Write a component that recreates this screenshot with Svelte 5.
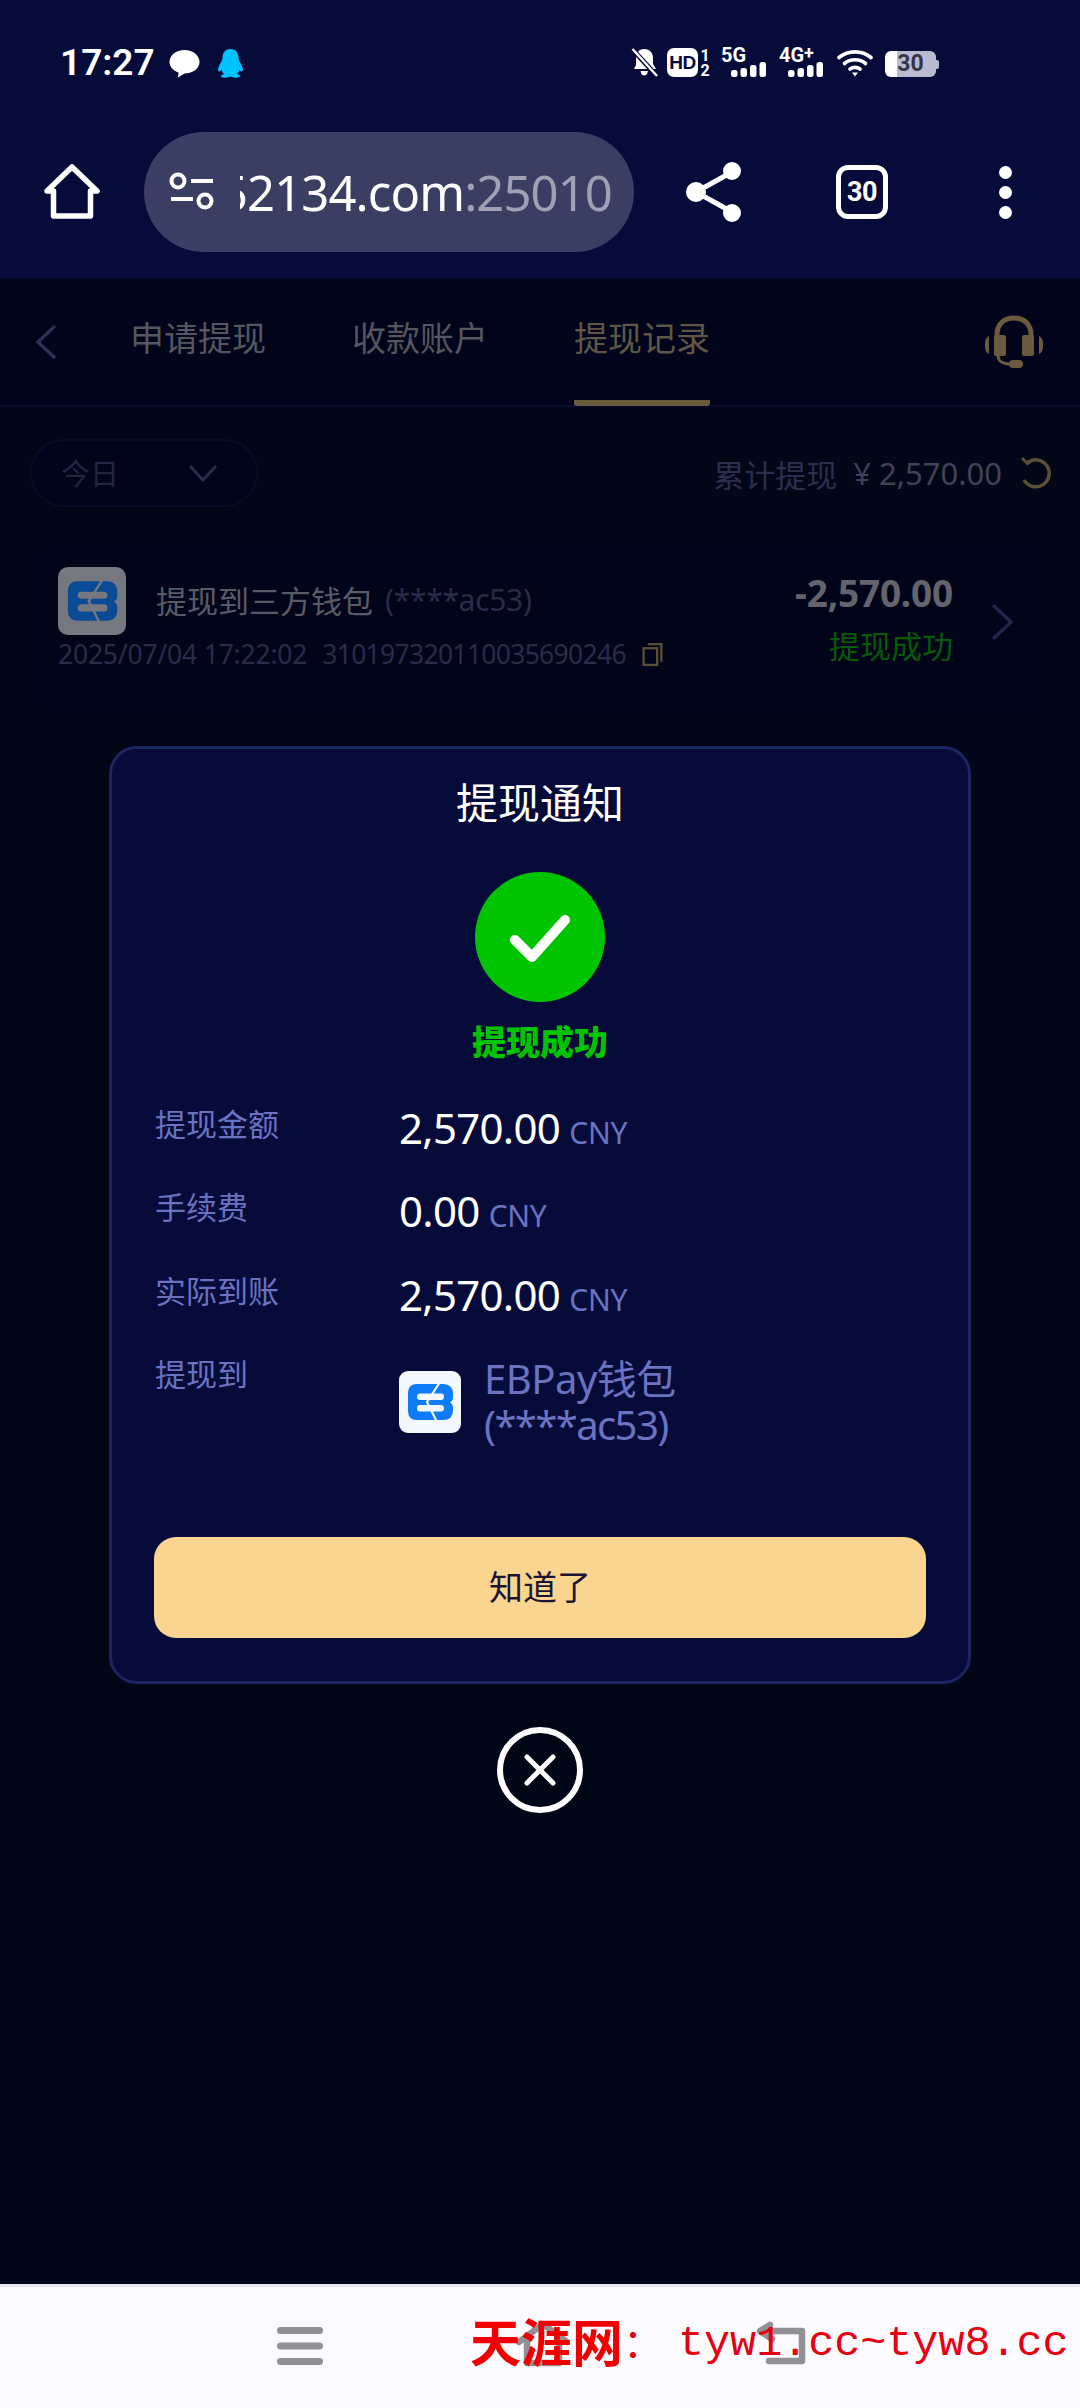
<script>
  const rows = [
    { label: '提现金额', value: '2,570.00' },
    { label: '手续费', value: '0.00' },
    { label: '实际到账', value: '2,570.00' }
  ];
  const tabs = ['申请提现', '收款账户', '提现记录'];
</script>

{#snippet eb(size, dim)}
  <svg class="eb" width={size} height={size} viewBox="0 0 62 62">
    <rect width="62" height="62" rx="9" fill={dim ? '#76787f' : '#f3f8ff'} />
    <path d="M18 13H44Q54 13 54 23V26Q54 30 51 31.500Q54 33 54 37V39Q54 49 44 49H18Q9 49 9 40V22Q9 13 18 13Z" fill={dim ? '#0b4a94' : '#0d7cf6'} />
    <rect x="18" y="22.500" width="27" height="6.500" rx="3.200" fill={dim ? '#76787f' : '#f3f8ff'} />
    <rect x="18" y="34" width="27" height="6.500" rx="3.200" fill={dim ? '#76787f' : '#f3f8ff'} />
    <path d="M41 11L28 31L38 51" stroke={dim ? '#76787f' : '#f3f8ff'} stroke-width="2.200" fill="none" />
  </svg>
{/snippet}

{#snippet bars()}
  <svg class="bars" width="35" height="15" viewBox="0 0 35 15">
    <rect x="0" y="8" width="6.500" height="7" rx="2.500" />
    <rect x="9.500" y="6" width="6.500" height="9" rx="2.500" />
    <rect x="19" y="3" width="6.500" height="12" rx="2.500" />
    <rect x="28.500" y="0" width="6.500" height="15" rx="2.500" />
  </svg>
{/snippet}

<div class="page">
  <header class="chrome">
    <div class="status">
      <div class="status-left">
        <span class="time">17:27</span>
        <svg width="31" height="30" viewBox="0 0 31 30"><path d="M15.500 2C24 2 30.500 7.500 30.500 14S24 25.500 15.500 25.500L9 29.500L9.500 24.500C4 22.500 .5 18.500 .5 14C.5 7.500 7 2 15.500 2Z" fill="#fff"/></svg>
        <svg class="qq" width="27" height="30" viewBox="0 0 27 30"><path d="M13.500 1C19 1 21.500 5 21.500 10C21.500 12 23 14 24.500 17C26 20 26.500 23 25 23.500C24 23.800 23 22.500 22.500 21.500C22 23.500 21 25 20 26C21.500 26.500 23 27 23 28.500C23 29.500 20 30 17 29.500C15.500 29.200 14.500 28.800 13.500 28.800C12.500 28.800 11.500 29.200 10 29.500C7 30 4 29.500 4 28.500C4 27 5.500 26.500 7 26C6 25 5 23.500 4.500 21.500C4 22.500 3 23.800 2 23.500C.5 23 1 20 2.500 17C4 14 5.500 12 5.500 10C5.500 5 8 1 13.500 1Z" fill="#00c2ff"/></svg>
      </div>
      <div class="status-right">
        <svg class="bell" width="27" height="29" viewBox="0 0 27 29"><path d="M13 1C19 1 22 5 22 10V16L25 21H3L5 17V10C5 5 8 1 13 1ZM9.500 23H17C16.500 26 15 27.500 13.200 27.500C11.500 27.500 10 26 9.500 23Z" fill="#fff"/><path d="M1 1L26 28" stroke="#070b3a" stroke-width="5"/><path d="M1.500 1L26 28" stroke="#fff" stroke-width="2.400"/></svg>
        <div class="hd"><span class="hd-box">HD</span><span class="sims"><i>1</i><i>2</i></span></div>
        <div class="net five"><span>5G</span>{@render bars()}</div>
        <div class="net four"><span>4G<sup>+</sup></span>{@render bars()}</div>
        <svg class="wifi" width="36" height="28" viewBox="0 0 36 28" fill="none" stroke="#fff" stroke-width="3.600" stroke-linecap="round"><path d="M2 8.500C11 1 25 1 34 8.500"/><path d="M7.500 14.500C13.500 9.500 22.500 9.500 28.500 14.500"/><path d="M13 20C16 18 20 18 23 20"/><path d="M15 23.500H21L18 27.500Z" fill="#fff" stroke="none"/></svg>
        <div class="battery"><span class="batt-body"><span class="batt-num">30</span></span><span class="batt-tip"></span></div>
      </div>
    </div>

    <div class="toolbar">
      <svg class="home" width="56" height="56" viewBox="0 0 56 56" fill="none" stroke="#fff" stroke-width="5.500" stroke-linejoin="round" stroke-linecap="round"><path d="M3 27L28 3L53 27H46.500V52H9.500V27Z"/></svg>
      <div class="pill">
        <svg class="tune" width="46" height="40" viewBox="0 0 46 40" fill="none" stroke="#fff" stroke-width="4"><circle cx="9" cy="9" r="6.500"/><path d="M22 9H44"/><path d="M2 27H24"/><circle cx="36" cy="29" r="6.500"/></svg>
        <div class="url"><span>ty52134.com<em>:25010</em></span></div>
      </div>
      <svg class="share" width="58" height="62" viewBox="0 0 58 62" fill="#fff"><path d="M47 11L11 31L47 51" stroke="#fff" stroke-width="5" fill="none"/><circle cx="47" cy="10" r="9"/><circle cx="11" cy="31" r="10"/><circle cx="47" cy="52" r="9"/></svg>
      <div class="tab-count">30</div>
      <div class="kebab"><i></i><i></i><i></i></div>
    </div>
  </header>

  <main class="content">
    <nav class="tabs">
      <svg class="back" width="24" height="36" viewBox="0 0 24 36" fill="none" stroke="#2e3054" stroke-width="3.500"><path d="M21 2L4 18L21 34"/></svg>
      <ul class="tab-list">
        {#each tabs as t, i}
          <li class:active={i === 2}>{t}</li>
        {/each}
      </ul>
      <svg class="headset" width="62" height="54" viewBox="0 0 62 54" fill="#6a5b3e"><path d="M14 30V20C14 9 21 3 31 3C41 3 48 9 48 20V30" fill="none" stroke="#6a5b3e" stroke-width="5"/><rect x="11" y="20" width="12" height="21" rx="2"/><rect x="39" y="20" width="12" height="21" rx="2"/><path d="M2 28C2 24 4 22 6 21V39C4 38 2 36 2 32Z"/><path d="M60 28C60 24 58 22 56 21V39C58 38 60 36 60 32Z"/><path d="M15 41C15 46 20 49 28 49" fill="none" stroke="#6a5b3e" stroke-width="3"/><rect x="26" y="45" width="14" height="8" rx="4"/></svg>
    </nav>

    <div class="filter-row">
      <div class="select"><span>今日</span><svg width="30" height="18" viewBox="0 0 30 18" fill="none" stroke="#2a2c4c" stroke-width="3"><path d="M2 2L15 16L28 2"/></svg></div>
      <div class="total">
        <span class="total-label">累计提现</span>
        <span class="total-val">¥ 2,570.00</span>
        <svg width="34" height="34" viewBox="0 0 34 34" fill="none" stroke="#5a5036" stroke-width="3.500"><path d="M9 7A13.500 13.500 0 1 1 6 24"/><path d="M4 2L9.500 7.500L15 4" stroke-width="3"/></svg>
      </div>
    </div>

    <article class="card">
      <div class="card-main">
        <div class="card-title">
          {@render eb(68, true)}
          <span class="cname">提现到三方钱包</span>
          <span class="cmask">(****ac53)</span>
        </div>
        <div class="card-meta">
          <span>2025/07/04 17:22:02</span>
          <span class="order">310197320110035690246</span>
          <svg width="23" height="25" viewBox="0 0 21 24" fill="none" stroke="#5a5036" stroke-width="2.200"><rect x="2" y="6" width="13" height="16"/><path d="M6 2H19V19"/></svg>
        </div>
      </div>
      <div class="card-side">
        <div class="amount">-2,570.00</div>
        <div class="state">提现成功</div>
      </div>
      <svg class="card-arrow" width="24" height="38" viewBox="0 0 24 38" fill="none" stroke="#23254a" stroke-width="3.500"><path d="M3 2L21 19L3 36"/></svg>
    </article>

    <div class="overlay">
      <section class="modal">
        <h2>提现通知</h2>
        <div class="ok">
          <svg width="62" height="50" viewBox="0 0 62 50" fill="none" stroke="#fff" stroke-width="10" stroke-linecap="round" stroke-linejoin="round"><path d="M6 26L23 43L56 6"/></svg>
        </div>
        <div class="ok-text">提现成功</div>
        <dl class="rows">
          {#each rows as r}
            <div class="row">
              <dt>{r.label}</dt>
              <dd><b>{r.value}</b> <small>CNY</small></dd>
            </div>
          {/each}
          <div class="row dest">
            <dt>提现到</dt>
            <dd class="wallet">
              {@render eb(62, false)}
              <span class="wallet-text"><span class="wname">EBPay钱包</span><span class="wmask">(****ac53)</span></span>
            </dd>
          </div>
        </dl>
        <button class="confirm">知道了</button>
      </section>
      <div class="close">
        <svg width="34" height="34" viewBox="0 0 34 34" fill="none" stroke="#fff" stroke-width="5" stroke-linecap="round"><path d="M4 4L30 30M30 4L4 30"/></svg>
      </div>
    </div>
  </main>

  <footer class="navbar">
    <svg width="46" height="38" viewBox="0 0 46 38" fill="#909095"><rect y="0" width="46" height="7" rx="3.500"/><rect y="15.500" width="46" height="7" rx="3.500"/><rect y="31" width="46" height="7" rx="3.500"/></svg>
    <svg width="54" height="46" viewBox="0 0 54 46" fill="none" stroke="#909095" stroke-width="6.500" stroke-linejoin="round" stroke-linecap="round"><path d="M3 21L27 3L51 21"/><path d="M11 20V42H43V20"/></svg>
    <svg width="50" height="44" viewBox="0 0 50 44" fill="none" stroke="#909095" stroke-width="6.500" stroke-linejoin="round" stroke-linecap="round"><path d="M13 40H46V10H6"/><path d="M14 4L4 10L16 18"/></svg>
    <div class="watermark"><strong>天涯网</strong><span>：</span><span class="wm-url">tyw1.cc~tyw8.cc</span></div>
  </footer>
</div>

<style>
  :global(body) {
    margin: 0;
    background: #01061a;
  }
  .page {
    width: 1080px;
    height: 2408px;
    display: flex;
    flex-direction: column;
    overflow: hidden;
    font-family: "Noto Sans", "Noto Sans CJK SC", sans-serif;
  }
  .chrome {
    height: 278px;
    flex: none;
    background: #070b3a;
    box-sizing: border-box;
    padding-top: 48px;
    color: #fff;
  }
  .status {
    height: 30px;
    display: flex;
    justify-content: space-between;
    align-items: center;
    padding: 0 141px 0 60px;
  }
  .status-left {
    display: flex;
    align-items: center;
  }
  .time {
    font: 600 37px/30px Roboto, sans-serif;
    width: 109px;
  }
  .qq { margin-left: 17px; }
  .status-right {
    display: flex;
    align-items: flex-start;
  }
  .bell { margin-right: 9px; }
  .hd {
    display: flex;
    margin-right: 10px;
  }
  .hd-box {
    width: 31px;
    height: 29px;
    border-radius: 7px;
    background: #fff;
    color: #070b3a;
    font: 800 19px/29px "Liberation Sans", sans-serif;
    text-align: center;
    letter-spacing: -0.5px;
  }
  .sims {
    width: 12px;
    margin-left: 1px;
    display: flex;
    flex-direction: column;
    font: 700 16px/15px Roboto, sans-serif;
    text-align: center;
  }
  .sims i { font-style: normal; }
  .net {
    display: flex;
    flex-direction: column;
  }
  .net span {
    font: 700 20px/14px Roboto, sans-serif;
    height: 14px;
    white-space: nowrap;
  }
  .net sup {
    font-size: 18px;
    line-height: 0;
    vertical-align: 3px;
  }
  .bars { fill: #fff; }
  .five { width: 45px; margin-right: 13px; }
  .five .bars { margin-left: 10px; }
  .four { width: 44px; margin-right: 14px; }
  .four .bars { margin-left: 9px; }
  .wifi { margin-right: 12px; margin-top: 1px; }
  .battery {
    display: flex;
    align-items: center;
    margin-top: 3px;
  }
  .batt-body {
    width: 51px;
    height: 26px;
    border-radius: 6px;
    background: linear-gradient(90deg, #fff 0 23%, #b9bbd0 23%);
    color: #35364a;
    font: 700 23px/26px Roboto, sans-serif;
    text-align: center;
  }
  .batt-tip {
    width: 3px;
    height: 9px;
    background: #b9bbd0;
    border-radius: 0 2px 2px 0;
  }
  .toolbar {
    margin-top: 54px;
    height: 120px;
    display: flex;
    align-items: center;
  }
  .home { margin-left: 44px; }
  .pill {
    margin-left: 44px;
    width: 490px;
    height: 120px;
    border-radius: 60px;
    background: #3b3e63;
    display: flex;
    align-items: center;
    box-sizing: border-box;
    padding-left: 25px;
  }
  .url {
    margin-left: 25px;
    width: 372px;
    display: flex;
    justify-content: flex-end;
    overflow: hidden;
    font-size: 49px;
    line-height: 66px;
    letter-spacing: -0.9px;
    white-space: nowrap;
    color: #fff;
  }
  .url span { flex: none; }
  .url em {
    font-style: normal;
    color: #9fa0b4;
  }
  .share { margin-left: 51px; }
  .tab-count {
    margin-left: 93px;
    width: 52px;
    height: 54px;
    box-sizing: border-box;
    border: 5px solid #fff;
    border-radius: 12px;
    font: 700 27px/44px Roboto, sans-serif;
    letter-spacing: -0.5px;
    text-align: center;
  }
  .kebab {
    margin-left: 111px;
    display: flex;
    flex-direction: column;
    gap: 7px;
  }
  .kebab i {
    width: 13px;
    height: 13px;
    border-radius: 50%;
    background: #fff;
  }
  .content {
    flex: 1;
    position: relative;
    background: #020717;
  }
  .tabs {
    height: 129px;
    box-sizing: border-box;
    background: #01041a;
    border-bottom: 2px solid #0a0d30;
    display: flex;
    align-items: flex-start;
    position: relative;
  }
  .back { margin: 46px 0 0 34px; }
  .tab-list {
    list-style: none;
    margin: 0 0 0 72px;
    padding: 0;
    display: flex;
    gap: 86px;
    font-size: 34px;
    color: #55565f;
  }
  .tab-list li {
    width: 136px;
    height: 127px;
    line-height: 118px;
    white-space: nowrap;
    box-sizing: border-box;
    font-family: "Noto Sans CJK SC", sans-serif;
  }
  .tab-list li.active {
    color: #5f5746;
    border-bottom: 6px solid #6a5b3e;
    border-radius: 0 0 3px 3px;
    height: 128px;
  }
  .headset {
    margin: 37px 35px 0 auto;
  }
  .filter-row {
    margin-top: 32px;
    padding: 0 28px 0 30px;
    display: flex;
    align-items: center;
    justify-content: space-between;
  }
  .select {
    width: 228px;
    height: 68px;
    box-sizing: border-box;
    border: 2px solid #0a0c26;
    border-radius: 34px;
    background: #01041a;
    display: flex;
    align-items: center;
    justify-content: space-between;
    padding: 0 38px 0 29px;
    font: 29px/40px "Noto Sans CJK SC", sans-serif;
    color: #232542;
  }
  .select span { margin-top: -3px; }
  .total {
    display: flex;
    align-items: center;
    color: #2c2e4e;
    font-size: 31px;
  }
  .total-label { font-family: "Noto Sans CJK SC", sans-serif; }
  .total-val {
    margin: 0 16px;
    color: #41425a;
  }
  .card {
    margin: 30px 28px 0 30px;
    height: 182px;
    box-sizing: border-box;
    padding: 30px 38px 0 28px;
    background: #02041a;
    border-radius: 22px;
    display: flex;
    align-items: flex-start;
  }
  .card-main { flex: 1; }
  .card-title {
    display: flex;
    align-items: center;
    height: 68px;
    font-size: 31px;
    color: #5a5b66;
  }
  .cname {
    margin: -4px 0 0 30px;
    font-family: "Noto Sans CJK SC", sans-serif;
  }
  .cmask {
    margin: -4px 0 0 12px;
    color: #2a2c4a;
    font-size: 30px;
    letter-spacing: -0.3px;
  }
  .card-meta {
    display: flex;
    align-items: center;
    gap: 15px;
    height: 38px;
    font-size: 26.500px;
    color: #2a2c4a;
    letter-spacing: -0.2px;
    white-space: nowrap;
  }
  .order { letter-spacing: -0.7px; }
  .card-side {
    text-align: right;
  }
  .amount {
    margin-top: 0;
    font-size: 37px;
    line-height: 52px;
    font-weight: 700;
    letter-spacing: -0.2px;
    color: #63646e;
  }
  .state {
    margin-top: 1px;
    font: 31px/50px "Noto Sans CJK SC", sans-serif;
    color: #055a0a;
  }
  .card-arrow {
    flex: none;
    margin: 36px 0 0 37px;
  }
  .overlay {
    position: absolute;
    top: 468px;
    left: 109px;
    width: 862px;
    display: flex;
    flex-direction: column;
    align-items: center;
  }
  .modal {
    width: 862px;
    height: 938px;
    box-sizing: border-box;
    border: 3px solid #1c2664;
    border-radius: 28px;
    background: #070b3a;
    padding: 0 43px;
    display: flex;
    flex-direction: column;
    align-items: center;
    color: #fff;
    font-family: "Noto Sans CJK SC", sans-serif;
  }
  h2 {
    margin: 24px 0 0;
    font-size: 42px;
    line-height: 56px;
    font-weight: 400;
  }
  .ok {
    margin-top: 43px;
    width: 130px;
    height: 130px;
    border-radius: 50%;
    background: #00c400;
    display: flex;
    align-items: center;
    justify-content: center;
  }
  .ok svg { margin-top: 3px; }
  .ok-text {
    margin-top: 17px;
    font-size: 34px;
    line-height: 44px;
    font-weight: 900;
    color: #00c400;
  }
  .rows {
    align-self: stretch;
    margin: 37.500px 0 0;
  }
  .row {
    display: flex;
    height: 83.500px;
  }
  dt {
    width: 244px;
    box-sizing: border-box;
    font-size: 31px;
    line-height: 44px;
    color: #6a73c0;
  }
  dd {
    margin: 0;
    font-family: "Noto Sans", sans-serif;
    line-height: 54px;
  }
  dd b {
    font-weight: 400;
    font-size: 42px;
    letter-spacing: -0.7px;
    color: #fff;
  }
  dd small {
    font-size: 30px;
    color: #6a73c0;
    margin-left: 5px;
    letter-spacing: -0.3px;
  }
  .dest { height: 100px; }
  .wallet {
    display: flex;
    align-items: center;
    height: 92px;
    font-size: 40px;
    line-height: 46px;
    color: #6a73c0;
    margin-top: 5px;
    font-family: "Noto Sans", "Noto Sans CJK SC", sans-serif;
  }
  .wallet-text {
    margin-left: 23px;
    display: flex;
    flex-direction: column;
  }
  .wname { letter-spacing: -0.5px; }
  .wmask { letter-spacing: -1.600px; }
  .eb { flex: none; }
  .confirm {
    margin-top: auto;
    margin-bottom: 43px;
    width: 772px;
    height: 101px;
    padding-bottom: 5px;
    flex: none;
    border: 0;
    border-radius: 22px;
    background: #fad590;
    color: #1a1433;
    font: 34px "Noto Sans CJK SC", sans-serif;
  }
  .close {
    margin-top: 43px;
    width: 86px;
    height: 86px;
    box-sizing: border-box;
    border: 6px solid #fff;
    border-radius: 50%;
    display: flex;
    align-items: center;
    justify-content: center;
  }
  .navbar {
    height: 124px;
    flex: none;
    box-sizing: border-box;
    border-top: 3px solid #e4e4f0;
    background: #fafaff;
    position: relative;
    display: flex;
    align-items: flex-start;
    padding: 0 0 0 277px;
  }
  .navbar svg:nth-of-type(1) { margin: 40px 0 0 0; }
  .navbar svg:nth-of-type(2) { margin: 34px 0 0 193px; }
  .navbar svg:nth-of-type(3) { margin: 34px 0 0 186px; }
  .watermark {
    position: absolute;
    left: 470px;
    top: 19px;
    display: flex;
    align-items: center;
    color: #e60012;
    white-space: nowrap;
  }
  .watermark strong {
    font: 700 51px/60px "Noto Sans CJK SC", serif;
    color: #f00000;
  }
  .watermark span {
    font: 40px/60px "Noto Sans CJK SC", sans-serif;
  }
  .watermark .wm-url {
    font: 43.400px/60px "Liberation Mono", monospace;
    margin: 8px 0 0 15px;
  }
</style>
